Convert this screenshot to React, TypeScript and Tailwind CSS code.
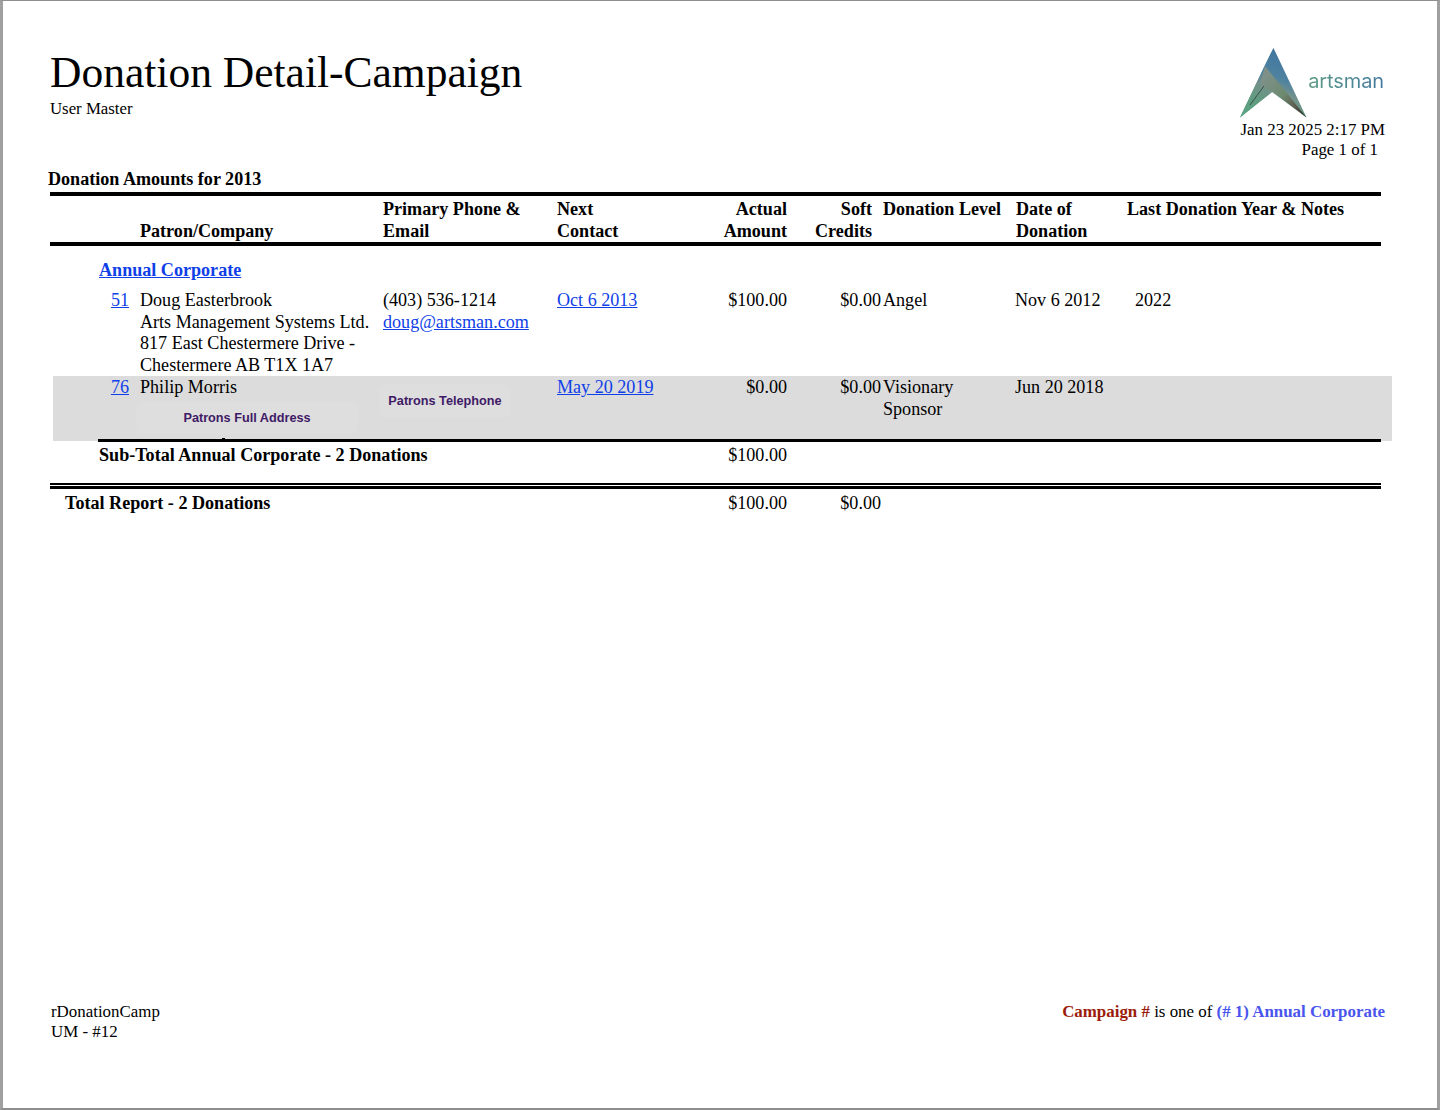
import React from "react";

const A = ({ children }: { children: React.ReactNode }) => (
  <a href="#" className="text-[#0f3fe8] underline">{children}</a>
);

const cols = "grid grid-cols-[80px_10px_243px_174px_143px_87px_94px_134px_112px_254px]";

function Logo() {
  return (
    <div className="flex items-start h-[72px]">
      <svg width="68" height="72" viewBox="0 0 68 72" className="shrink-0">
        <defs>
          <linearGradient id="a" x1="0.55" y1="0.1" x2="0.2" y2="1">
            <stop offset="0" stopColor="#44789f" />
            <stop offset="0.3" stopColor="#4d82a0" />
            <stop offset="0.5" stopColor="#74918a" />
            <stop offset="0.75" stopColor="#5f9c80" />
            <stop offset="1" stopColor="#5ba283" />
          </linearGradient>
          <linearGradient id="b" x1="0.1" y1="0.25" x2="0.95" y2="1">
            <stop offset="0" stopColor="#7e9088" />
            <stop offset="0.45" stopColor="#6d8a6f" />
            <stop offset="0.75" stopColor="#5d5a4e" />
            <stop offset="1" stopColor="#2e2e2c" />
          </linearGradient>
        </defs>
        <path d="M33.5 0 L0 69.5 L32 44 Z" fill="url(#a)" />
        <path d="M33.5 0 L66.5 69.5 L32 44 L0 69.5 L24 19 Z" fill="url(#a)" />
        <path d="M25 18 L66.5 69.5 L33 44 L20 36 Z" fill="url(#b)" />
        <path d="M24 38 L10 57" stroke="#2f3b36" strokeWidth="0.8" fill="none" />
      </svg>
      <span className="mt-[19px] mr-[1px] font-['Inter',sans-serif] text-[20px] leading-[28px] tracking-[-0.1px] bg-gradient-to-r from-[#5c9a84] to-[#44789f] bg-clip-text text-transparent">
        artsman
      </span>
    </div>
  );
}

export default function App() {
  return (
    <div className="w-[1440px] h-[1110px] bg-white border-t border-t-[#8e8e8e] border-l-[3px] border-l-[#a0a0a0] border-r-[3px] border-r-[#a0a0a0] border-b-2 border-b-[#8e8e8e] font-['Liberation_Serif',serif] text-black text-[18.1px] leading-[21.7px] flex flex-col overflow-hidden">
      <header className="flex justify-between pl-[47px] pr-[52px] pt-[47px] h-[166px]">
        <div>
          <h1 className="text-[43.5px] leading-[48px]">Donation Detail-Campaign</h1>
          <div className="text-[16.8px] leading-[20px] mt-[3px]">User Master</div>
        </div>
        <div className="flex flex-col items-end">
          <div><Logo /></div>
          <div className="leading-[19.5px] text-[16.9px]">Jan 23 2025 2:17 PM</div>
          <div className="leading-[19.5px] text-[16.9px] pr-[7px]">Page 1 of 1</div>
        </div>
      </header>

      <div className="pl-[45px] font-bold leading-[24px] h-[25px]">Donation Amounts for 2013</div>

      <div className="ml-[47px] w-[1331px]">
        <div className={`${cols} border-t-4 border-b-4 border-black font-bold h-[54px] pt-[3px]`}>
          <div />
          <div />
          <div className="self-end">Patron/Company</div>
          <div>Primary Phone &amp;<br />Email</div>
          <div>Next<br />Contact</div>
          <div className="text-right">Actual<br />Amount</div>
          <div className="text-right pr-[9px]">Soft<br />Credits</div>
          <div className="pl-[2px] whitespace-nowrap">Donation Level</div>
          <div className="pl-[1px]">Date of<br />Donation</div>
          <div>Last Donation Year &amp; Notes</div>
        </div>

        <div className="pl-[49px] pt-[14px] h-[43px] font-bold"><A>Annual Corporate</A></div>

        <div className={`${cols} h-[87px] pt-[1px]`}>
          <div className="text-right pr-[1px]"><A>51</A></div>
          <div />
          <div className="whitespace-nowrap">Doug Easterbrook<br />Arts Management Systems Ltd.<br />817 East Chestermere Drive -<br />Chestermere AB T1X 1A7</div>
          <div>(403) 536-1214<br /><A>doug@artsman.com</A></div>
          <div><A>Oct 6 2013</A></div>
          <div className="text-right">$100.00</div>
          <div className="text-right">$0.00</div>
          <div className="pl-[2px]">Angel</div>
          <div>Nov 6 2012</div>
          <div className="pl-[8px]">2022</div>
        </div>

        <div className="relative ml-[3px] mr-[-11px] bg-[#dcdcdc] h-[65px] pt-[1px]">
          <div className={`${cols} ml-[-3px]`}>
            <div className="text-right pr-[1px]"><A>76</A></div>
            <div />
            <div>Philip Morris</div>
            <div />
            <div><A>May 20 2019</A></div>
            <div className="text-right">$0.00</div>
            <div className="text-right">$0.00</div>
            <div className="pl-[2px]">Visionary<br />Sponsor</div>
            <div>Jun 20 2018</div>
            <div />
          </div>
          <div className="absolute left-[83px] top-[25px] w-[222px] h-[33px] rounded-lg bg-[#dedede] flex items-center justify-center font-['Liberation_Sans',sans-serif] font-bold text-[12.7px] leading-[16px] text-[#3f1a66]">
            Patrons Full Address
          </div>
          <div className="absolute left-[326px] top-[8px] w-[132px] h-[34px] rounded-lg bg-[#dedede] flex items-center justify-center font-['Liberation_Sans',sans-serif] font-bold text-[12.7px] leading-[16px] text-[#3f1a66]">
            Patrons Telephone
          </div>
          <div className="absolute left-[169px] top-[62px] w-[3px] h-[2px] bg-black" />
        </div>

        <div className="relative flex ml-[48px] mt-[-2px] border-t-[3px] border-black h-[44px] pt-[3px]">
          <div className="w-[625px] pl-[1px] font-bold">Sub-Total Annual Corporate - 2 Donations</div>
          <div className="w-[64px] text-right">$100.00</div>
        </div>

        <div className="h-[6px] border-t-[2px] border-b-[3px] border-black" />

        <div className="flex h-[28px] pt-[4px]">
          <div className="w-[610px] pl-[15px] font-bold">Total Report - 2 Donations</div>
          <div className="w-[127px] text-right">$100.00</div>
          <div className="w-[94px] text-right">$0.00</div>
        </div>
      </div>

      <div className="flex-1" />

      <footer className="flex justify-between pl-[48px] pr-[52px] pb-[66px] text-[16.9px] leading-[20px]">
        <div>rDonationCamp<br />UM - #12</div>
        <div>
          <span className="font-bold text-[#9c1c0c]">Campaign #</span> is one of{" "}
          <span className="font-bold text-[#4a55ee]">(# 1) Annual Corporate</span>
        </div>
      </footer>
    </div>
  );
}
